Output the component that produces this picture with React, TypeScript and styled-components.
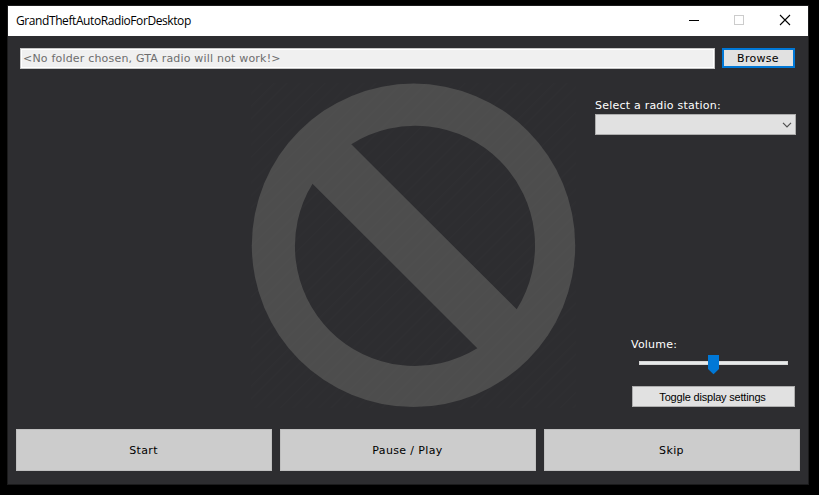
import React from "react";
import styled, { createGlobalStyle, css } from "styled-components";

const GlobalStyle = createGlobalStyle`
  * { box-sizing: border-box; }
  body { margin: 0; background: #000; }
  button, input { margin: 0; }
`;

const Desktop = styled.div`
  width: 819px;
  height: 495px;
  padding: 5px 10px 10px 7px;
  background: #000;
  overflow: hidden;
`;

const Window = styled.main`
  width: 802px;
  height: 480px;
  border: 1px solid #1b1b1c;
  background: #2d2d30;
  color: #fff;
  font: 11px/13px Verdana, "DejaVu Sans", sans-serif;
`;

const TitleBar = styled.header`
  display: flex;
  align-items: center;
  justify-content: space-between;
  height: 30px;
  padding-left: 8px;
  background: #fff;
  color: #000;
`;

const Title = styled.span`
  font: 12px/16px "Segoe UI", "Open Sans", sans-serif;
  letter-spacing: -0.41px;
  white-space: nowrap;
`;

const CaptionButtons = styled.svg`
  width: 138px;
  height: 30px;
`;

const PathRow = styled.div`
  display: flex;
  gap: 7px;
  height: 21px;
  margin: 12px 13px 0 12px;
`;

const PathField = styled.input`
  width: 695px;
  height: 21px;
  padding: 0 0 1px 2px;
  border: 1px solid #c6c6c6;
  outline: 1px solid #fff;
  outline-offset: -2px;
  border-radius: 0;
  background: #f0f0f0;
  color: #6d6d6d;
  font: 11px/13px "DejaVu Sans", sans-serif;
  letter-spacing: 0.19px;
`;

const Button = styled.button<{ $kind: "focused" | "plain" | "large" }>`
  padding: 0;
  border-radius: 0;
  white-space: nowrap;
  color: #000;
  font: 11px/13px "DejaVu Sans", sans-serif;
  letter-spacing: 0.3px;
  ${({ $kind }) =>
    $kind === "focused"
      ? css`
          width: 73px;
          height: 20px;
          padding-right: 1px;
          border: 2px solid #0078d7;
          background: #e1e1e1;
        `
      : $kind === "plain"
      ? css`
          width: 163px;
          height: 21px;
          padding: 1px 2px 0 0;
          border: 1px solid #adadad;
          background: #e1e1e1;
          font: 11px/13px "Liberation Sans", sans-serif;
          letter-spacing: -0.19px;
        `
      : css`
          flex: 1;
          height: 42px;
          padding-right: 1px;
          border: 1px solid #bfbfbf;
          background: #ccc;
          letter-spacing: 0.36px;
        `}
`;

const Content = styled.section`
  display: flex;
  justify-content: space-between;
  height: 360px;
  padding: 14px 12px 0 243px;
`;

const StationArt = styled.svg`
  width: 325px;
  height: 325px;
`;

const Controls = styled.div`
  display: flex;
  flex-direction: column;
  width: 201px;
  padding: 16px 0 22px;
`;

const Label = styled.span`
  line-height: 13px;
  font-family: "DejaVu Sans", sans-serif;
  letter-spacing: 0.22px;
  white-space: nowrap;
`;

const StationSelect = styled.div`
  display: flex;
  align-items: center;
  justify-content: flex-end;
  height: 21px;
  margin-top: 2px;
  padding-right: 3px;
  border: 1px solid #adadad;
  background: #e1e1e1;
`;

const VolumeGroup = styled.div`
  display: flex;
  flex-direction: column;
  margin: auto 1px 0 36px;
`;

const Slider = styled.svg`
  width: 164px;
  height: 20px;
  margin: 4px 0 11px;
`;

const Transport = styled.footer`
  display: flex;
  gap: 8px;
  margin: 0 8px;
`;

const ToggleRow = styled.div`
  padding-left: 1px;
  display: flex;
`;

export default function App() {
  return (
    <Desktop>
      <GlobalStyle />
      <Window>
        <TitleBar>
          <Title>GrandTheftAutoRadioForDesktop</Title>
          <CaptionButtons viewBox="0 0 138 30" fill="none" shapeRendering="crispEdges">
            <path d="M19 14.5h10" stroke="#000" />
            <rect x="64.5" y="9.5" width="9" height="9" stroke="#ccc" />
            <path d="M110 9l10 10M120 9l-10 10" stroke="#000" strokeWidth="1.1" shapeRendering="auto" />
          </CaptionButtons>
        </TitleBar>
        <PathRow>
          <PathField readOnly value="<No folder chosen, GTA radio will not work!>" />
          <Button $kind="focused">Browse</Button>
        </PathRow>
        <Content>
          <StationArt viewBox="251 83 325 325">
            <defs>
              <clipPath id="disc">
                <circle cx="413.5" cy="245.3" r="161.7" />
              </clipPath>
              <pattern
                id="hatch"
                width="9"
                height="9"
                patternUnits="userSpaceOnUse"
                patternTransform="rotate(45)"
              >
                <rect width="1.5" height="9" fill="#fff" fillOpacity="0.006" />
              </pattern>
            </defs>
            <g clipPath="url(#disc)">
              <rect x="251" y="83" width="325" height="325" fill="#4d4d4d" />
              <path
                fill="#2d2d30"
                d="M351.3 144.3A119.8 119.8 0 0 1 516.7 309.3ZM312.5 183.7A119.8 119.8 0 0 0 477.3 348.3Z"
              />
            </g>
            <rect x="251" y="83" width="325" height="325" fill="url(#hatch)" />
          </StationArt>
          <Controls>
            <Label>Select a radio station:</Label>
            <StationSelect>
              <svg width="10" height="6" viewBox="0 0 10 6" fill="none">
                <path d="M1 0.8l4 4 4-4" stroke="#505050" strokeWidth="1.2" />
              </svg>
            </StationSelect>
            <VolumeGroup>
              <Label>Volume:</Label>
              <Slider viewBox="631 355 164 20">
                <rect x="639.5" y="361.5" width="148" height="3" fill="#e7eaea" stroke="#d6d6d6" />
                <path d="M708 355h11v14l-5.5 5.3-5.5-5.3z" fill="#0078d7" />
              </Slider>
              <ToggleRow>
                <Button $kind="plain">Toggle display settings</Button>
              </ToggleRow>
            </VolumeGroup>
          </Controls>
        </Content>
        <Transport>
          <Button $kind="large">Start</Button>
          <Button $kind="large">Pause / Play</Button>
          <Button $kind="large">Skip</Button>
        </Transport>
      </Window>
    </Desktop>
  );
}
